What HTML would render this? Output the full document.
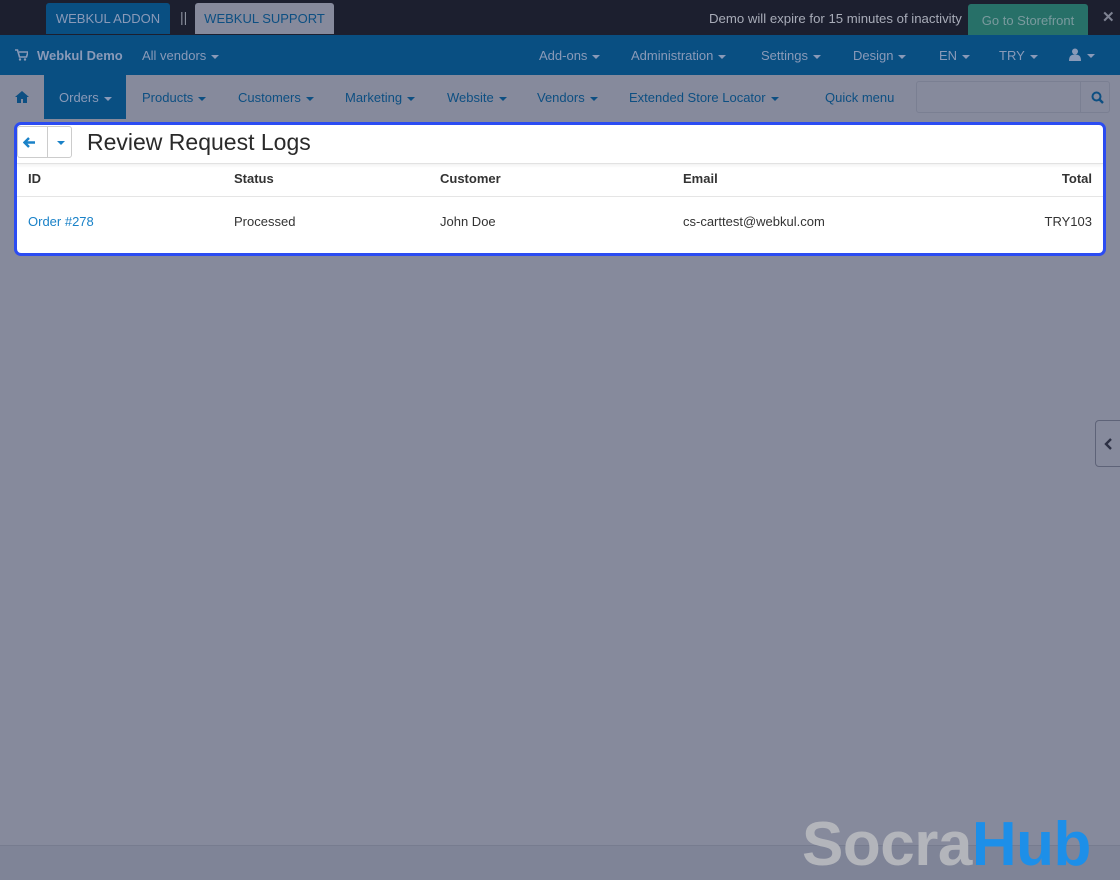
<!DOCTYPE html><html><head><style>
*{box-sizing:border-box;margin:0;padding:0}
body{width:1120px;height:880px;background:#868a9c;font-family:"Liberation Sans",Arial,sans-serif;position:relative;overflow:hidden;font-size:13px}
.top{position:absolute;left:0;top:0;width:1120px;height:35px;background:#1c1f2f}
.b1{position:absolute;left:46px;top:3px;width:124px;height:31px;background:#094f82;color:#8a9ab8;border-radius:3px 3px 0 0;font-size:13px;text-align:center;line-height:32px}
.b2{position:absolute;left:195px;top:3px;width:139px;height:31px;background:#868a9c;color:#0d4f82;border-radius:3px 3px 0 0;font-size:13px;text-align:center;line-height:32px}
.sep{position:absolute;left:180px;top:9px;color:#8a8f9c;font-size:14px}
.demo{position:absolute;left:709px;top:11px;color:#a8acb8;font-size:13.2px}
.sf{position:absolute;left:968px;top:4px;width:120px;height:31px;background:#277068;color:#7a9a9e;font-size:13px;text-align:center;line-height:33px;border-radius:3px 3px 0 0}
.x{position:absolute;left:1102px;top:8px;color:#7e8292;font-size:15px;font-weight:bold}
.bar2{position:absolute;left:0;top:35px;width:1120px;height:40px;background:#094f82;color:#8a9ab8;font-size:13px}
.bar2 span{position:absolute;top:13px}
.car{display:inline-block;border-left:4px solid transparent;border-right:4px solid transparent;border-top:4px solid currentColor;vertical-align:middle;margin-left:5px}
.nav{position:absolute;left:0;top:75px;width:1120px;height:44px;color:#0d4f82;font-size:13px}
.nav span{position:absolute;top:15px}
.ord{position:absolute;left:44px;top:75px;width:82px;height:44px;background:#094f82}
.search{position:absolute;left:916px;top:81px;width:194px;height:32px;border:1px solid #7a7f92;border-radius:3px}
.panel{position:absolute;left:14px;top:122px;width:1092px;height:134px;background:#fff;border:3px solid #2b4cf2;border-radius:7px}
.hdr{position:absolute;left:0;top:0;width:1086px;height:39px;border-bottom:1px solid #e2e2e2;box-shadow:0 2px 3px rgba(0,0,0,.05)}
.btns{position:absolute;left:0;top:1px;width:55px;height:32px;border:1px solid #ccc;border-radius:3px}
.btns div{position:absolute;left:29px;top:0;height:30px;border-left:1px solid #ccc}
h1{position:absolute;left:70px;top:4px;font-weight:normal;font-size:23px;color:#2a2a2a}
.th{position:absolute;top:46px;font-weight:bold;color:#333;font-size:13px}
.td{position:absolute;top:89px;color:#333;font-size:13px}
.line{position:absolute;left:0;top:71px;width:1086px;border-top:1px solid #e5e5e5}
.tab{position:absolute;left:1095px;top:420px;width:30px;height:47px;border:1px solid #5e6378;border-radius:4px;}
.logo{position:absolute;left:802px;top:814px;font-size:62px;font-weight:bold;color:#b3b5bb;letter-spacing:-0.5px;font-family:"Liberation Sans",sans-serif;line-height:62px;white-space:nowrap}
.foot{position:absolute;left:0;top:845px;width:1120px;height:35px;background:#7f8497;border-top:1px solid #777c8f}
</style></head><body>
<div class="top">
<div class="b1">WEBKUL ADDON</div><div class="sep">||</div><div class="b2">WEBKUL SUPPORT</div>
<div class="demo">Demo will expire for 15 minutes of inactivity</div>
<div class="sf">Go to Storefront</div><div class="x">✕</div></div>
<div class="bar2">
<svg style="position:absolute;left:15px;top:14px" width="13" height="12" viewBox="0 0 13 12"><path d="M0 1h2.5l2 7h7l1.5-5H4" fill="none" stroke="#8a9ab8" stroke-width="1.6"/><circle cx="5" cy="10.5" r="1.2" fill="#8a9ab8"/><circle cx="10" cy="10.5" r="1.2" fill="#8a9ab8"/></svg>
<span style="left:37px;font-weight:bold">Webkul Demo</span>
<span style="left:142px">All vendors<i class="car"></i></span>
<span style="left:539px">Add-ons<i class="car"></i></span>
<span style="left:631px">Administration<i class="car"></i></span>
<span style="left:761px">Settings<i class="car"></i></span>
<span style="left:853px">Design<i class="car"></i></span>
<span style="left:939px">EN<i class="car"></i></span>
<span style="left:999px">TRY<i class="car"></i></span>
<svg style="position:absolute;left:1069px;top:13px" width="12" height="13" viewBox="0 0 12 13"><circle cx="6" cy="3.5" r="3" fill="#8a9ab8"/><path d="M0 13c0-5 2-6.5 6-6.5s6 1.5 6 6.5z" fill="#8a9ab8"/></svg>
<i class="car" style="position:absolute;left:1082px;top:19px"></i>
</div>
<div class="ord"></div>
<div class="nav">
<svg style="position:absolute;left:15px;top:16px" width="14" height="12" viewBox="0 0 14 12"><path d="M7 0L0 6h2v6h4V8h2v4h4V6h2z" fill="#0d4f82"/></svg>
<span style="left:59px;color:#8a9ab8">Orders<i class="car"></i></span>
<span style="left:142px">Products<i class="car"></i></span>
<span style="left:238px">Customers<i class="car"></i></span>
<span style="left:345px">Marketing<i class="car"></i></span>
<span style="left:447px">Website<i class="car"></i></span>
<span style="left:537px">Vendors<i class="car"></i></span>
<span style="left:629px">Extended Store Locator<i class="car"></i></span>
<span style="left:825px">Quick menu</span>
</div>
<div class="search"><div style="position:absolute;left:163px;top:0;height:30px;border-left:1px solid #7a7f92"></div>
<svg style="position:absolute;left:174px;top:9px" width="13" height="13" viewBox="0 0 13 13"><circle cx="5.5" cy="5.5" r="4" fill="none" stroke="#0d4f82" stroke-width="2"/><path d="M8.5 8.5L12 12" stroke="#0d4f82" stroke-width="2.4"/></svg></div>
<div class="panel">
<div class="hdr"><div class="btns"><div></div>
<svg style="position:absolute;left:5px;top:10px" width="13" height="11" viewBox="0 0 13 11"><path d="M6 1L1.5 5.5 6 10M2 5.5h10" fill="none" stroke="#1a82c8" stroke-width="2.4"/></svg>
<i class="car" style="position:absolute;left:34px;top:14px;color:#1a82c8"></i></div>
<h1>Review Request Logs</h1></div>
<div class="th" style="left:11px">ID</div><div class="th" style="left:217px">Status</div><div class="th" style="left:423px">Customer</div><div class="th" style="left:666px">Email</div><div class="th" style="right:11px">Total</div>
<div class="line"></div>
<div class="td" style="left:11px;color:#1a82c8">Order #278</div><div class="td" style="left:217px">Processed</div><div class="td" style="left:423px">John Doe</div><div class="td" style="left:666px">cs-carttest@webkul.com</div><div class="td" style="right:11px">TRY103</div>
</div>
<div class="tab"><svg style="position:absolute;left:8px;top:17px" width="9" height="12" viewBox="0 0 9 12"><path d="M7 1L2 6l5 5" fill="none" stroke="#2c3044" stroke-width="2.4"/></svg></div>
<div class="foot"></div>
<div class="logo">Socra<span style="color:#1d8fe8">Hub</span></div>
</body></html>
